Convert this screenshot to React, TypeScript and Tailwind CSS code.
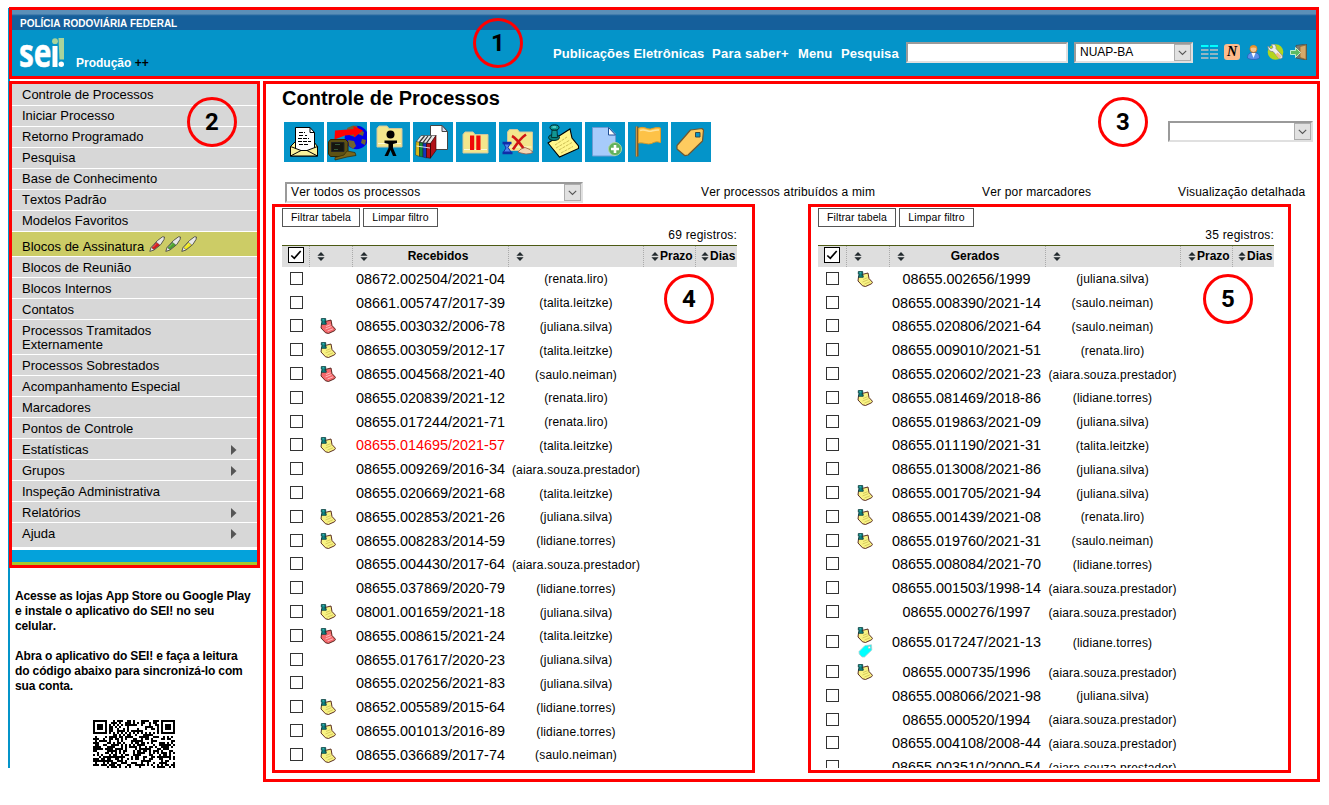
import React from "react";

type Row = { n: string; u: string; note?: "yellow" | "red"; tag?: boolean; hot?: boolean };

const received: Row[] = [
  { n: "08672.002504/2021-04", u: "renata.liro" },
  { n: "08661.005747/2017-39", u: "talita.leitzke" },
  { n: "08655.003032/2006-78", u: "juliana.silva", note: "red" },
  { n: "08655.003059/2012-17", u: "talita.leitzke", note: "yellow" },
  { n: "08655.004568/2021-40", u: "saulo.neiman", note: "red" },
  { n: "08655.020839/2021-12", u: "renata.liro" },
  { n: "08655.017244/2021-71", u: "renata.liro" },
  { n: "08655.014695/2021-57", u: "talita.leitzke", note: "yellow", hot: true },
  { n: "08655.009269/2016-34", u: "aiara.souza.prestador" },
  { n: "08655.020669/2021-68", u: "talita.leitzke" },
  { n: "08655.002853/2021-26", u: "juliana.silva", note: "yellow" },
  { n: "08655.008283/2014-59", u: "lidiane.torres", note: "yellow" },
  { n: "08655.004430/2017-64", u: "aiara.souza.prestador" },
  { n: "08655.037869/2020-79", u: "lidiane.torres" },
  { n: "08001.001659/2021-18", u: "juliana.silva", note: "yellow" },
  { n: "08655.008615/2021-24", u: "talita.leitzke", note: "red" },
  { n: "08655.017617/2020-23", u: "juliana.silva" },
  { n: "08655.020256/2021-83", u: "juliana.silva" },
  { n: "08652.005589/2015-64", u: "lidiane.torres", note: "yellow" },
  { n: "08655.001013/2016-89", u: "lidiane.torres", note: "yellow" },
  { n: "08655.036689/2017-74", u: "saulo.neiman", note: "yellow" },
];

const generated: Row[] = [
  { n: "08655.002656/1999", u: "juliana.silva", note: "yellow" },
  { n: "08655.008390/2021-14", u: "saulo.neiman" },
  { n: "08655.020806/2021-64", u: "saulo.neiman" },
  { n: "08655.009010/2021-51", u: "renata.liro" },
  { n: "08655.020602/2021-23", u: "aiara.souza.prestador" },
  { n: "08655.081469/2018-86", u: "lidiane.torres", note: "yellow" },
  { n: "08655.019863/2021-09", u: "juliana.silva" },
  { n: "08655.011190/2021-31", u: "talita.leitzke" },
  { n: "08655.013008/2021-86", u: "juliana.silva" },
  { n: "08655.001705/2021-94", u: "juliana.silva", note: "yellow" },
  { n: "08655.001439/2021-08", u: "renata.liro", note: "yellow" },
  { n: "08655.019760/2021-31", u: "saulo.neiman", note: "yellow" },
  { n: "08655.008084/2021-70", u: "lidiane.torres" },
  { n: "08655.001503/1998-14", u: "aiara.souza.prestador" },
  { n: "08655.000276/1997", u: "aiara.souza.prestador" },
  { n: "08655.017247/2021-13", u: "lidiane.torres", note: "yellow", tag: true },
  { n: "08655.000735/1996", u: "aiara.souza.prestador", note: "yellow" },
  { n: "08655.008066/2021-98", u: "juliana.silva" },
  { n: "08655.000520/1994", u: "aiara.souza.prestador" },
  { n: "08655.004108/2008-44", u: "aiara.souza.prestador" },
  { n: "08655.003510/2000-54", u: "aiara.souza.prestador" },
];

const menu: { t: string; kind?: "arrow" | "pens" | "two" }[] = [
  { t: "Controle de Processos" },
  { t: "Iniciar Processo" },
  { t: "Retorno Programado" },
  { t: "Pesquisa" },
  { t: "Base de Conhecimento" },
  { t: "Textos Padrão" },
  { t: "Modelos Favoritos" },
  { t: "Blocos de Assinatura", kind: "pens" },
  { t: "Blocos de Reunião" },
  { t: "Blocos Internos" },
  { t: "Contatos" },
  { t: "Processos Tramitados Externamente", kind: "two" },
  { t: "Processos Sobrestados" },
  { t: "Acompanhamento Especial" },
  { t: "Marcadores" },
  { t: "Pontos de Controle" },
  { t: "Estatísticas", kind: "arrow" },
  { t: "Grupos", kind: "arrow" },
  { t: "Inspeção Administrativa" },
  { t: "Relatórios", kind: "arrow" },
  { t: "Ajuda", kind: "arrow" },
];

function SmallNote({ kind }: { kind: "yellow" | "red" }) {
  const fill = kind === "yellow" ? "#f8f283" : "#f4686c";
  const line = kind === "yellow" ? "#d2c65a" : "#ffc4c4";
  return (
    <svg width="16" height="16" viewBox="0 0 16 16" className="block">
      <path d="M1.500 6 5 3.500 11 2 12 7.500 15.500 11.300 14.500 12.800 8.500 15.500 5.500 14.800 1 10z" fill={fill} stroke="#4a1a12" strokeWidth=".9" />
      <path d="M6 8.500l4.500-1.800M5.500 11l6-2.400M7.500 13l5.500-2.200" stroke={line} strokeWidth=".9" />
      <path d="M1.300.6h4.400v2.600H5v1.400h1.200v1.700H1.500V4.600H2.300V3.200h-1z" fill="#0f8686" stroke="#063838" strokeWidth=".8" />
      <path d="M2.500 1.800h1.500" stroke="#5fd0c8" strokeWidth=".8" />
    </svg>
  );
}

function SmallTag() {
  return (
    <svg width="15" height="14" viewBox="0 0 15 14" className="ml-px mt-px block">
      <path d="M1 7.500 7 1.500 13.500.8 13.800 6 6.500 13 4 13 1.200 10z" fill="#0ff" stroke="#b4cccc" strokeWidth=".8" />
      <circle cx="11.300" cy="3.400" r="1.200" fill="#fff" stroke="#aaa" strokeWidth=".6" />
    </svg>
  );
}

function Pen({ color }: { color: string }) {
  return (
    <svg width="16" height="16" viewBox="0 0 16 16" className="block">
      <path d="M.8 15.400 2 11.500 8.500 4.500 13.500.8 15.500 1 15 3.500 11.800 8.500 5 14z" fill="#e8e8e8" stroke="#3a3a3a" strokeWidth=".8" />
      <path d="M2.600 11.800 7.400 6.300 10.800 9 4.900 13.600z" fill={color} stroke="#333" strokeWidth=".4" />
      <path d="M4 11.300 7.700 7.500" stroke="#fff" strokeOpacity=".4" strokeWidth=".7" />
    </svg>
  );
}

function Sort() {
  return (
    <svg width="8" height="9" viewBox="0 0 8 9" className="block shrink-0">
      <path d="M4 0 7.600 3.800H.4zM4 9 .4 5.200h7.200z" fill="#222a2e" />
    </svg>
  );
}

function Check({ on }: { on?: boolean }) {
  return on ? (
    <span className="block h-4 w-4 border-[1.500px] border-black bg-white">
      <svg width="14" height="14" viewBox="0 0 14 14" className="block">
        <path d="M2.300 7.500 5.300 10.300 11.700 3" fill="none" stroke="#000" strokeWidth="1.700" />
      </svg>
    </span>
  ) : (
    <span className="block h-[13px] w-[13px] border border-[#333] bg-white" />
  );
}

function Select({ text, cls }: { text?: string; cls: string }) {
  return (
    <div className={"flex h-[21px] border-2 border-t-[#9a9a9a] border-l-[#9a9a9a] border-r-[#e0e0e0] border-b-[#e0e0e0] bg-white " + cls}>
      <span className="flex-1 whitespace-nowrap pl-1 text-[12px] leading-[17px]">{text}</span>
      <span className="flex h-[17px] w-[17px] items-center justify-center border border-[#adadad] bg-[#e1e1e1]">
        <svg width="9" height="6" viewBox="0 0 9 6">
          <path d="M.8.8 4.500 4.500 8.200.8" fill="none" stroke="#555" strokeWidth="1.100" />
        </svg>
      </span>
    </div>
  );
}

const Folder = ({ x = 6, y = 5 }: { x?: number; y?: number }) => (
  <g transform={`translate(${x} ${y})`}>
    <path d="M0 3.500 2 1h8l2 2.500h13V22H0z" fill="#f3e68c" stroke="#cfc6a0" />
    <path d="M1 18.500h23" stroke="#fffbd8" />
  </g>
);

function Tool({ children }: { children: React.ReactNode }) {
  return (
    <svg width="40" height="40" viewBox="0 0 40 40" className="block bg-[#0494c9]">
      {children}
    </svg>
  );
}

function Toolbar() {
  return (
    <div className="flex gap-[3px]">
      <Tool>
        <path d="M6.500 24.500 11 20h19l3.500 4.500v9.500h-27z" fill="#fbf29a" stroke="#000" />
        <path d="M11.500 28.500V5.500H26l4.500 5v17l-10 3z" fill="#fff" stroke="#000" />
        <path d="M26 5.500v5h4.500" fill="none" stroke="#000" />
        <path d="M15 10.500h6M15 13.500h4M21 13.500h2M14 16.500h11M14 19.500h13M15 22.500h10" stroke="#000" strokeDasharray="4 1" />
        <path d="M6.500 24.500 17 28.500h6l10.500-4v9.500h-27z" fill="#fbf29a" stroke="#000" />
        <path d="M6.500 34 17 28.500M33.500 34 23 28.500" stroke="#000" />
      </Tool>
      <Tool>
        <circle cx="29.500" cy="15.500" r="11.800" fill="#0000e8" />
        <path d="M20 6l6-2.500 4 .5 1 3 6 3-1 4-5-2-3 3-6-2zM21 18l6 1 2 5-3 3-4-3zM35 17l4 1-1 5-4-2z" fill="#6f6430" />
        <path d="M7.500 17.500 8 8.500 26.500 7V4L36 8.500 27 15.500v-3l-9 1z" fill="#f00" />
        <path d="M1.500 20 3.500 17.500h15l2.500 2.500v12l-2.500 2.500h-15L1.500 32z" fill="#5e5214" stroke="#2e2706" />
        <path d="M4.500 20.500h12.500v9H4.500z" fill="#15160f" stroke="#222" />
        <path d="M8 22.500h5M7 27.500h4" stroke="#355a3a" />
        <path d="M20 29l8 1.500 1 3-9 1.500-12 3v-2.500l9-2.500z" fill="#7a671b" stroke="#2e2706" strokeWidth=".7" />
      </Tool>
      <Tool>
        <Folder x={7} y={3} />
        <circle cx="20.500" cy="12.500" r="4" />
        <path d="M14.500 18.500h12.500v2.500l-4 1v4l3.500 8H23L20.500 28 18 34h-3.500l4-8v-4l-4-1z" />
      </Tool>
      <Tool>
        <path d="M17.500 3.500H29l5.500 6v18h-17z" fill="#fff" stroke="#444" />
        <path d="M29 3.500V9.500h5.500z" fill="#d9d9ef" stroke="#444" />
        <path d="M3 20 8 13.500h15l-5.500 8z" fill="#e8e8e8" stroke="#333" strokeWidth=".6" />
        <path d="M3 19.500l3.500.8V34.500l-4-1.500z" fill="#d8b818" stroke="#333" strokeWidth=".5" />
        <path d="M6.500 20.300l3.500.7v14l-3.500-.8z" fill="#118a3c" stroke="#222" strokeWidth=".5" />
        <path d="M10 21l3.500.6V36l-3.500-1z" fill="#1436c0" stroke="#222" strokeWidth=".5" />
        <path d="M13.500 21.600l4-.1v14.800l-4-.7zM17.500 21.500 23 13.500v15l-5.500 7.500z" fill="#b11218" stroke="#300" strokeWidth=".6" />
        <path d="M6.500 20 11.500 14M10 20.700l5-6.700M13.500 21.200l5-7.200" stroke="#333" strokeWidth="1.200" />
        <path d="M3.500 24l13.500 2" stroke="#fff" strokeOpacity=".8" />
      </Tool>
      <Tool>
        <Folder x={7} y={9} />
        <path d="M14 13.500h4.200V28H14zM20.300 13.500h4.200V28h-4.200z" fill="#f00808" />
      </Tool>
      <Tool>
        <Folder x={8.500} y={6.500} />
        <path d="M13 14c4 2 7 6 12 13M27 12.500c-6 4-9 9-13 15" fill="none" stroke="#d01515" strokeWidth="2.600" />
        <path d="M3.500 21h9M3.500 31h10" stroke="#102ca8" strokeWidth="2.400" />
        <path d="M5 22h6l-2 3.500 3 4.500H4.500L7 26z" fill="#4e84ee" stroke="#102ca8" />
        <path d="M19 30l3-3 4-1.500 5 2 3 3-3 1-4 .5-5-1z" fill="#f2d7b3" stroke="#9b5b4a" strokeWidth=".8" />
      </Tool>
      <Tool>
        <path d="M6 21 17 14l11-7 2 9 6.500 8v2.500L17.500 35z" fill="#fff68c" stroke="#000" strokeWidth="1.100" />
        <path d="M13 23l12-8M14 26l14-8M17 28l13-7.500M19 31l12-6.500" stroke="#cdbf55" strokeDasharray="3 1" />
        <ellipse cx="12" cy="15.500" rx="5.500" ry="3" fill="#0b7f7c" stroke="#022" />
        <path d="M10 8h5l.5 7.500H9.500z" fill="#119693" stroke="#022" strokeWidth=".8" />
        <ellipse cx="12.500" cy="5.500" rx="4.500" ry="2.600" fill="#12a09b" stroke="#022" />
        <path d="M10.500 5h3.500" stroke="#98f0ea" />
      </Tool>
      <Tool>
        <path d="M7.500 5.500H24l6.500 6.500v22h-23z" fill="#a7cbfb" stroke="#6d9ad2" />
        <path d="M23.500 5.500 30.500 13h-7z" fill="#fff" stroke="#204f97" />
        <circle cx="30" cy="27" r="6.500" fill="#61b15b" stroke="#aed8a5" />
        <path d="M30 23v8M26 27h8" stroke="#fff" strokeWidth="2.600" />
      </Tool>
      <Tool>
        <path d="M9 4.500v30" stroke="#8a5d22" strokeWidth="3" />
        <path d="M8.500 4.500v30" stroke="#c79548" />
        <path d="M10.500 6.500c5-3 8 1 12 .5 4-1 6-2 10-1v14.500c-4-1.500-6-.5-9 1-4 1.500-8-1.500-13-.5z" fill="#fdc247" stroke="#e09a22" />
        <path d="M12 8.500c5-2 8 1.500 11 .8 3-.8 4-1.500 8-1.300" fill="none" stroke="#ffe29a" strokeWidth="1.500" />
      </Tool>
      <Tool>
        <path d="M6 23.500 19.500 8 31 6.500l1.500 1.500-1 11L17 33l-3 .7L6 27z" fill="#fecb5f" stroke="#6f5731" strokeWidth="1.200" strokeLinejoin="round" />
        <path d="M24.500 10.500h4.500v4.500h-4.500z" fill="#0494c9" stroke="#3a4a46" />
      </Tool>
    </div>
  );
}

function HeaderIcons() {
  return (
    <div className="ml-2 mt-[14px] flex h-4 gap-[6px]">
      <svg width="17" height="16" viewBox="0 0 17 16">
        <path d="M0 2h7.500M9 2h8" stroke="#0ff" strokeWidth="2" />
        <path d="M0 6h7.500M9 6h8M0 10h7.500M9 10h8M0 14h7.500M9 14h8" stroke="#c0c0c0" strokeWidth="1.600" />
      </svg>
      <span className="flex h-4 w-4 items-center justify-center rounded-[3px] bg-[#fdbb8c] font-['Liberation_Serif',serif] text-[14px] font-bold italic leading-4 text-black">
        N
      </span>
      <svg width="15" height="16" viewBox="0 0 15 16">
        <path d="M1.500 14c0-4 2-5.500 6-5.500s6 1.500 6 5.500c-3 2-9 2-12 0z" fill="#5b8fe8" stroke="#2a58b0" strokeWidth=".7" />
        <path d="M5.500 9l2 5 2-5z" fill="#fff" />
        <circle cx="7.500" cy="5" r="3.600" fill="#f6c48c" stroke="#b36a1c" strokeWidth=".8" />
        <path d="M3.800 4.500C4 0 11 0 11.200 4.500 9 3 6 3 3.800 4.500z" fill="#e8952e" />
      </svg>
      <svg width="17" height="16" viewBox="0 0 17 16">
        <circle cx="8.500" cy="8" r="7.800" fill="#b3d51c" />
        <path d="M1 2 4 5 6 3.500 4.500.5C8-.5 9.500 2 9 4.500l6.500 7.500c.5 2-1.500 3.500-3.500 2.500L6 7.500C3 8 .5 5 1 2z" fill="#ededed" stroke="#888" strokeWidth=".8" />
        <path d="M9.500 9.500l4 4" stroke="#f0c080" strokeWidth="3" />
      </svg>
      <svg width="18" height="16" viewBox="0 0 18 16">
        <path d="M6 1.500 16.500 0v16L6 14z" fill="#777b74" stroke="#4a4b44" strokeWidth=".7" />
        <path d="M10 2.500l6-1.500v14.500l-6-2z" fill="#d5aa6b" stroke="#8a6128" strokeWidth=".7" />
        <path d="M.5 6.500h5v-3L10.500 8.500l-5 5v-3h-5z" fill="#5ebb63" stroke="#e3ffe0" strokeWidth=".8" />
      </svg>
    </div>
  );
}

function Logo() {
  return (
    <svg width="48" height="32" viewBox="0 0 48 32" className="block overflow-visible">
      <text x="0" y="29" textLength="32.500" lengthAdjust="spacingAndGlyphs" fill="#fff" stroke="#fff" strokeWidth=".5" fontFamily="Open Sans, sans-serif" fontWeight="700" fontSize="39">se</text>
      <path d="M33.500 8h5v21h-5z" fill="#fff" />
      <circle cx="36" cy="3.200" r="2.900" fill="#a9d49b" />
      <path d="M39.500 0H45v21.500h-4.500z" fill="#a9d49b" />
      <circle cx="42.300" cy="26.300" r="2.700" fill="#fff" />
    </svg>
  );
}

function Qr() {
  const cells: string[] = [];
  const finder = (x: number, y: number) => {
    const d = Math.max(Math.abs(x - 3), Math.abs(y - 3));
    return d === 3 || d < 2;
  };
  let s = 4711;
  for (let y = 0; y < 24; y++) {
    for (let x = 0; x < 41; x++) {
      s = (s * 1103515245 + 12345) % 2147483648;
      let on = (s >> 16) % 100 < 50;
      if (y < 8 && x < 8) on = x < 7 && y < 7 && finder(x, y);
      else if (y < 8 && x > 32) on = x > 33 && y < 7 && finder(x - 34, y);
      else if (y === 6) on = x % 2 === 0;
      else if (x === 6) on = y % 2 === 0;
      if (on) cells.push(`M${x * 2} ${y * 2}h2v2h-2z`);
    }
  }
  return (
    <svg width="82" height="48" viewBox="0 0 82 48" shapeRendering="crispEdges" className="ml-[83px] block">
      <path d={cells.join("")} />
    </svg>
  );
}

const COLS_L = "grid grid-cols-[28px_43px_156px_135px_52px_41px]";
const COLS_R = "grid grid-cols-[29px_43px_156px_135px_52px_41px]";

function ProcessTable({ title, count, rows, right }: { title: string; count: string; rows: Row[]; right?: boolean }) {
  const cols = right ? COLS_R : COLS_L;
  return (
    <section className={right ? "w-[456px]" : "w-[455px]"}>
      <div className="flex h-[19px] gap-[3px] text-[10.5px] leading-[17px] tracking-[0.12px]">
        <button className="w-[78px] border border-[#555] bg-white">Filtrar tabela</button>
        <button className="w-[75px] border border-[#555] bg-white">Limpar filtro</button>
      </div>
      <div className="h-[18px] text-right text-[12px] leading-[16px] tracking-[0.2px]">{count}</div>
      <div className={cols + " h-[22px] border-t border-[#4d5a14] bg-[#dedede] text-[12px] font-bold leading-[21px]"}>
        <div className="flex border-r border-dotted border-[#aaa] pl-[6px] pt-[1px]"><Check on /></div>
        <div className="flex items-center border-r border-dotted border-[#aaa] pl-[7px]"><Sort /></div>
        <div className="flex items-center border-r border-dotted border-[#aaa] pl-[7px]">
          <Sort />
          <span className="flex-1 text-center">{title}</span>
        </div>
        <div className="flex items-center border-r border-dotted border-[#aaa] pl-[7px]"><Sort /></div>
        <div className="flex items-center gap-[1px] border-r border-dotted border-[#aaa] pl-[7px]"><Sort />Prazo</div>
        <div className="flex items-center gap-[1px] pl-[5px]"><Sort />Dias</div>
      </div>
      {rows.map((r) => (
        <div key={r.n} className={cols + (r.tag ? " h-[36.2px]" : " h-[23.8px]") + " items-center"}>
          <div className="-mt-px flex pl-2"><Check /></div>
          <div className="flex flex-col items-start pl-[10px]">
            {r.note && <SmallNote kind={r.note} />}
            {r.tag && <SmallTag />}
          </div>
          <div className={"whitespace-nowrap text-center text-[14.4px] leading-5 " + (right ? "-ml-[3px] " : "-ml-px ") + (r.hot ? "text-[#f00]" : "")}>{r.n}</div>
          <div className={"whitespace-nowrap pt-px text-center text-[12px] leading-5 tracking-[0.18px] " + (right ? "-ml-[2px]" : "-ml-px")}>({r.u})</div>
        </div>
      ))}
    </section>
  );
}

function Frame({ cls }: { cls: string }) {
  return <div className={"absolute border-[3px] border-[#f00] " + cls} />;
}

function Badge({ n, cls }: { n: string; cls: string }) {
  return (
    <div className={"absolute flex h-[50px] w-[50px] items-center justify-center rounded-full border-[3px] border-[#f00] font-[Roboto,sans-serif] text-[24px] font-bold " + cls}>
      {n}
    </div>
  );
}

export default function App() {
  return (
    <div className="relative h-[805px] w-[1329px] overflow-hidden bg-white pl-2 pt-2 font-['Liberation_Sans',Arial,sans-serif] text-black [font-kerning:none]">
      <div className="flex h-[760px] w-[1310px] flex-col overflow-hidden border-l-2 border-[#0494c9]">
        <header className="h-[69px] shrink-0 bg-[#0494c9]">
          <div className="h-[22px] bg-[linear-gradient(#5b8fb8_0px,#5b8fb8_6px,#2b6ca3_7px,#155f9b_8px)] pl-[10px] pt-[9px] text-[10px] font-bold leading-[13px] text-white">
            POLÍCIA RODOVIÁRIA FEDERAL
          </div>
          <div className="flex h-[47px]">
            <div className="shrink-0 pl-[9px] pt-[8px]"><Logo /></div>
            <div className="w-[486px] shrink-0 pl-[9px] pt-[25px] text-[12px] font-bold leading-[16px] text-white">
              Produção <span className="text-black">++</span>
            </div>
            <nav className="flex w-[353px] shrink-0 whitespace-nowrap pt-[15px] text-[13px] font-bold leading-[18px] tracking-[0.08px] text-white">
              <span className="w-[159px]">Publicações Eletrônicas</span>
              <span className="w-[86px] tracking-[0.25px]">Para saber+</span>
              <span className="w-[43px]">Menu</span>
              <span>Pesquisa</span>
            </nav>
            <div className="mt-3 h-[21px] w-[162px] shrink-0 border-2 border-b-[#e0e0e0] border-l-[#9a9a9a] border-r-[#e0e0e0] border-t-[#9a9a9a] bg-white" />
            <Select text="NUAP-BA" cls="ml-[6px] mt-3 w-[119px] shrink-0" />
            <HeaderIcons />
          </div>
        </header>

        <div className="flex min-h-0 flex-1">
          <aside className="w-[253px] shrink-0">
            <nav className="ml-[2px] mt-[4px] w-[245px] text-[13px]">
              <div className="h-[4px] bg-[#d7d7d7]" />
              {menu.map((m, i) => (
                <div
                  key={m.t}
                  className={
                    "flex items-center pl-[10px] leading-[14px] " +
                    (i < 20 ? "border-b border-white " : "") +
                    (m.kind === "pens"
                      ? "h-[25px] bg-[#cccc66] pt-[5px]"
                      : m.kind === "two"
                        ? "h-[35px] bg-[#d7d7d7] pt-[2px]"
                        : i === 20
                          ? "h-[24px] bg-[#d7d7d7] pb-[2px]"
                          : i > 7
                            ? "h-[21px] bg-[#d7d7d7] pt-[2px]"
                            : "h-[21px] bg-[#d7d7d7]")
                  }
                >
                  <span className={m.kind === "two" ? "w-[150px]" : "whitespace-nowrap"}>{m.t}</span>
                  {m.kind === "pens" && (
                    <span className="-mt-[6px] ml-[5px] flex">
                      <Pen color="#d91c1c" />
                      <Pen color="#4ca52c" />
                      <Pen color="#f2ea1c" />
                    </span>
                  )}
                  {m.kind === "arrow" && (
                    <svg width="6" height="10" viewBox="0 0 6 10" className="ml-auto mr-5">
                      <path d="M0 0 5.500 5 0 10z" fill="#555" />
                    </svg>
                  )}
                </div>
              ))}
              <div className="mt-[3px] h-3 bg-[#04a2db]" />
              <div className="h-[3px] bg-[#a6c82b]" />
            </nav>
            <div className="mt-[24px] pl-[5px] text-[12px] font-bold leading-[15px] tracking-[-0.13px]">
              <p>Acesse as lojas App Store ou Google Play<br />e instale o aplicativo do SEI! no seu<br />celular.</p>
              <p className="mt-[15px]">Abra o aplicativo do SEI! e faça a leitura<br />do código abaixo para sincronizá-lo com<br />sua conta.</p>
            </div>
            <div className="mt-[26px] w-[247px]"><Qr /></div>
          </aside>

          <main className="flex-1 pl-[19px]">
            <h1 className="h-[45px] pt-[10px] text-[20px] font-bold leading-[23px]">Controle de Processos</h1>
            <div className="flex h-10 justify-between pl-[2px]">
              <Toolbar />
              <Select cls="-mt-px mr-[5px] w-[145px]" />
            </div>
            <div className="mt-5 flex h-[21px] pl-[3px] text-[12px] leading-[20px] tracking-[0.18px]">
              <Select text="Ver todos os processos" cls="w-[298px]" />
              <span className="ml-[118px] w-[281px] whitespace-nowrap">Ver processos atribuídos a mim</span>
              <span className="w-[196px]">Ver por marcadores</span>
              <span className="whitespace-nowrap">Visualização detalhada</span>
            </div>
            <div className="mt-[5px] flex gap-[81px]">
              <ProcessTable title="Recebidos" count="69 registros:" rows={received} />
              <ProcessTable title="Gerados" count="35 registros:" rows={generated} right />
            </div>
          </main>
        </div>
      </div>

      <Frame cls="left-[9px] top-[7px] h-[72px] w-[1310px]" />
      <Frame cls="left-[9px] top-[81px] h-[487px] w-[251px]" />
      <Frame cls="left-[263px] top-[81px] h-[701px] w-[1057px]" />
      <Frame cls="left-[272px] top-[204px] h-[569px] w-[483px]" />
      <Frame cls="left-[808px] top-[204px] h-[569px] w-[483px]" />
      <Badge n="1" cls="left-[473px] top-[18px]" />
      <Badge n="2" cls="left-[187px] top-[97px]" />
      <Badge n="3" cls="left-[1098px] top-[97px]" />
      <Badge n="4" cls="left-[664px] top-[274px]" />
      <Badge n="5" cls="left-[1203px] top-[274px]" />
    </div>
  );
}
